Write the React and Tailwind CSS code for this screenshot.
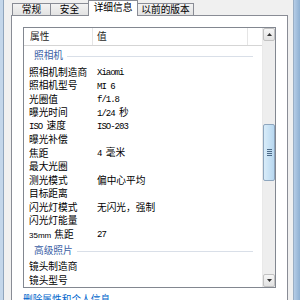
import React from 'react';

const cjk = "font-['Noto_Sans_CJK_SC','Noto_Sans_CJK_JP',sans-serif]";
const mono = "font-['Liberation_Mono',monospace] text-[9px] tracking-[-1px]";

// ASCII runs in a narrow mono face, CJK in Noto
const Mixed = ({ text }) =>
  text.split(/([\x00-\x7F]+)/).filter(Boolean).map((part, i) =>
    /^[\x00-\x7F]+$/.test(part) ? (
      <span key={i} className={mono}>{part}</span>
    ) : (
      <span key={i}>{part}</span>
    )
  );

const camera = [
  ['照相机制造商', 'Xiaomi'],
  ['照相机型号', 'MI 6'],
  ['光圈值', 'f/1.8'],
  ['曝光时间', '1/24 秒'],
  ['ISO 速度', 'ISO-203'],
  ['曝光补偿', ''],
  ['焦距', '4 毫米'],
  ['最大光圈', ''],
  ['测光模式', '偏中心平均'],
  ['目标距离', ''],
  ['闪光灯模式', '无闪光，强制'],
  ['闪光灯能量', ''],
  ['35mm 焦距', '27'],
];

const advanced = [
  ['镜头制造商', ''],
  ['镜头型号', ''],
];

const Row = ({ name, value }) => (
  <div className="flex h-[13.5px] items-center leading-none text-black">
    <div className="w-[73px] pl-[5px] whitespace-nowrap">
      {name.startsWith('35mm') ? (
        <>
          <span className="font-['Liberation_Sans',sans-serif] text-[8px]">35mm</span>
          <span className="ml-[3px]">焦距</span>
        </>
      ) : (
        <Mixed text={name} />
      )}
    </div>
    <div className="whitespace-nowrap">
      <Mixed text={value} />
    </div>
  </div>
);

const Group = ({ title, h }) => (
  <div className={`flex ${h} items-center leading-none`}>
    <span className="pl-[10px] text-[#3b5fa6]">{title}</span>
    <div className="ml-[4px] mr-[9px] h-px flex-1 bg-[#d9dfe8]"></div>
  </div>
);

const Tab = ({ label, w, active }) =>
  active ? (
    <div
      className={`${w} relative z-10 -mb-px -ml-px flex h-[16px] items-start justify-center border border-b-0 border-[#898c95] bg-white pt-[2px] leading-none`}
    >
      {label}
    </div>
  ) : (
    <div
      className={`${w} -ml-px flex h-[12px] items-center justify-center border border-b-0 border-[#898c95] bg-gradient-to-b from-[#f3f3f3] to-[#e3e3e3] leading-none first:ml-0`}
    >
      {label}
    </div>
  );

export default function App() {
  return (
    <div className={`flex h-[300px] w-[300px] overflow-hidden bg-[#f0f0f0] text-[9.7px] ${cjk}`}>
      {/* window frame, left */}
      <div className="w-[4px] border-r border-[#8fa5bd] bg-[#c3d6ea]"></div>

      {/* dialog body */}
      <div className="flex w-[277px] shrink-0 flex-col ml-[7px]">
        <div className="flex h-[15px] items-end pl-px">
          <Tab label="常规" w="w-[39px]" />
          <Tab label="安全" w="w-[39px]" />
          <Tab label="详细信息" w="w-[50px]" active />
          <Tab label="以前的版本" w="w-[57px]" />
        </div>

        <div className="flex-1 border border-[#898c95] bg-white p-[11px]">
          <div className="flex h-[261px] border border-[#828790] bg-white">
            <div className="flex-1 overflow-hidden">
              {/* header */}
              <div className="flex h-[18px] items-center border-b border-[#d5d5d5] leading-none text-[#1e1e1e]">
                <div className="flex h-full w-[69px] items-center border-r border-[#e5e5e5] pl-[6px]">属性</div>
                <div className="flex h-full w-[155px] items-center border-r border-[#e5e5e5] pl-[4px]">值</div>
              </div>

              <Group title="照相机" h="h-[20px]" />
              {camera.map(([n, v]) => (
                <Row key={n} name={n} value={v} />
              ))}
              <Group title="高级照片" h="h-[19px]" />
              {advanced.map(([n, v]) => (
                <Row key={n} name={n} value={v} />
              ))}
            </div>

            {/* scrollbar */}
            <div className="flex w-[13px] flex-col border-l border-[#e9e9e9] bg-[#eeeeee]">
              <div className="flex h-[13px] items-center justify-center rounded-[2px] border border-[#c2c2c2] bg-gradient-to-b from-[#f6f6f6] to-[#e2e2e2]">
                <svg width="5" height="3" viewBox="0 0 5 3">
                  <path d="M0 3 L2.5 0 L5 3 Z" fill="#333" />
                </svg>
              </div>
              <div className="h-[83px]"></div>
              <div className="flex h-[57px] items-center justify-center rounded-[2px] border border-[#8ea6be] bg-gradient-to-r from-[#d9ecf9] to-[#b8d8f0]">
                <div className="flex flex-col gap-[1px]">
                  <div className="h-px w-[5px] bg-[#4c6a87]"></div>
                  <div className="h-px w-[5px] bg-[#4c6a87]"></div>
                  <div className="h-px w-[5px] bg-[#4c6a87]"></div>
                  <div className="h-px w-[5px] bg-[#4c6a87]"></div>
                </div>
              </div>
              <div className="flex-1"></div>
              <div className="flex h-[13px] items-center justify-center rounded-[2px] border border-[#c2c2c2] bg-gradient-to-b from-[#f6f6f6] to-[#e2e2e2]">
                <svg width="5" height="3" viewBox="0 0 5 3">
                  <path d="M0 0 L2.5 3 L5 0 Z" fill="#333" />
                </svg>
              </div>
            </div>
          </div>

          <div className="mt-[7px] text-[#0066cc] leading-none">删除属性和个人信息</div>
        </div>
      </div>

      {/* window frame, right */}
      <div className="ml-[5px] w-[7px] border-l border-[#9aaec4] bg-gradient-to-r from-[#b4cce6] to-[#8fb0d2]"></div>
    </div>
  );
}
